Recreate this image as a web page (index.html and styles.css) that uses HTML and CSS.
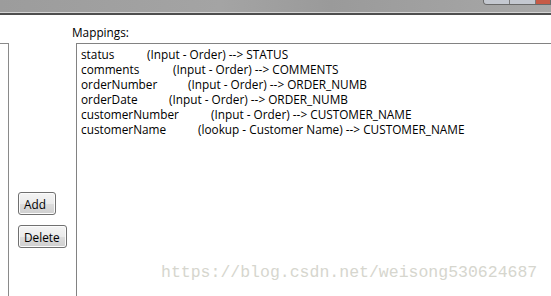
FILE: index.html
```html
<!DOCTYPE html>
<html lang="en">
<head>
    <meta charset="UTF-8">
    <title>Mappings</title>
    <link rel="stylesheet" href="styles.css">
</head>
<body>
    <div class="titlebar">
        <div class="winbtns">
            <span class="wb"></span>
            <span class="wb"></span>
            <span class="wb close"></span>
        </div>
    </div>
    <div class="main">
        <div class="side">
            <div class="panel"></div>
            <div class="buttons">
                <button class="btn add">Add</button>
                <button class="btn del">Delete</button>
            </div>
        </div>
        <div class="mappings">
            <div class="label">Mappings:</div>
            <ul class="list">
                <li><span class="name" style="width:66px">status</span>(Input - Order) --&gt; STATUS</li>
                <li><span class="name" style="width:92px">comments</span>(Input - Order) --&gt; COMMENTS</li>
                <li><span class="name" style="width:107px">orderNumber</span>(Input - Order) --&gt; ORDER_NUMB</li>
                <li><span class="name" style="width:88px">orderDate</span>(Input - Order) --&gt; ORDER_NUMB</li>
                <li><span class="name" style="width:130px">customerNumber</span>(Input - Order) --&gt; CUSTOMER_NAME</li>
                <li><span class="name" style="width:117px">customerName</span>(lookup - Customer Name) --&gt; CUSTOMER_NAME</li>
            </ul>
        </div>
    </div>
    <div class="watermark">https://blog.csdn.net/weisong530624687</div>
</body>
</html>
```

FILE: styles.css
```css
*{
    margin: 0;padding: 0;
    box-sizing: border-box;
}
body {
    width: 551px;
    height: 296px;
    overflow: hidden;
    background: #fff;
    font-family: "Open Sans", "Noto Sans", sans-serif;
    font-size: 11.8px;
    color: #000;
    position: relative;
    display: flex;
    flex-direction: column;
}
ul{
    list-style: none;
}
.titlebar{
    height: 15px;
    flex-shrink: 0;
    background: linear-gradient(90deg, #9c9c9c 0%, #a4a4a4 40%, #9a9a9a 60%, #a8a8a8 100%);
    border-bottom: 2px solid #4e4e4e;
    box-shadow: inset 0 -1px 0 #d4d4d4;
    display: flex;
    justify-content: flex-end;
}
.winbtns{
    display: flex;
    height: 5px;
    border: 1px solid #6a6a6a;
    border-top: none;
    border-radius: 0 0 0 4px;
    overflow: hidden;
    width: 68px;
}
.wb{
    width: 27px;
    background: #c4c8d0;
    border-right: 1px solid #7a7a7a;
}
.wb.close{
    width: 14px;
    border-right: none;
    background: #c65a46;
}
.main{
    flex: 1;
    min-height: 0;
    display: flex;
}
.side{
    width: 76px;
    display: flex;
    flex-direction: column;
    position: relative;
}
.panel{
    width: 9px;
    flex: 1;
    margin-top: 28px;
    border-top: 1px solid #8a8a8a;
    border-right: 1px solid #8a8a8a;
}
.buttons{
    position: absolute;
    left: 18px;
    top: 177px;
    display: flex;
    flex-direction: column;
    align-items: flex-start;
    gap: 10px;
}
.btn{
    font-family: "Open Sans", "Noto Sans", sans-serif;
    font-size: 11.8px;
    color: #000;
    height: 23px;
    padding: 0 5px;
    text-align: left;
    border: 1px solid #707070;
    border-radius: 3px;
    background: linear-gradient(#f4f4f4 0%, #ebebeb 50%, #dddddd 51%, #cfcfcf 100%);
    box-shadow: inset 0 0 0 1px #fcfcfc;
}
.btn.add{
    width: 38px;
}
.btn.del{
    width: 49px;
}
.mappings{
    flex: 1;
    padding-top: 9px;
    display: flex;
    flex-direction: column;
}
.label{
    margin-left: -4px;
    height: 19px;
    line-height: 16px;
}
.list{
    flex: 1;
    border-top: 1px solid #828282;
    border-left: 1px solid #828282;
    padding: 3px 0 0 4px;
}
.list li{
    height: 15px;
    line-height: 15px;
    white-space: nowrap;
}
.name{
    display: inline-block;
}
.watermark{
    position: absolute;
    left: 161px;
    top: 263px;
    font-family: "Liberation Mono", monospace;
    font-size: 16.5px;
    color: #d6d6ce;
}
```
